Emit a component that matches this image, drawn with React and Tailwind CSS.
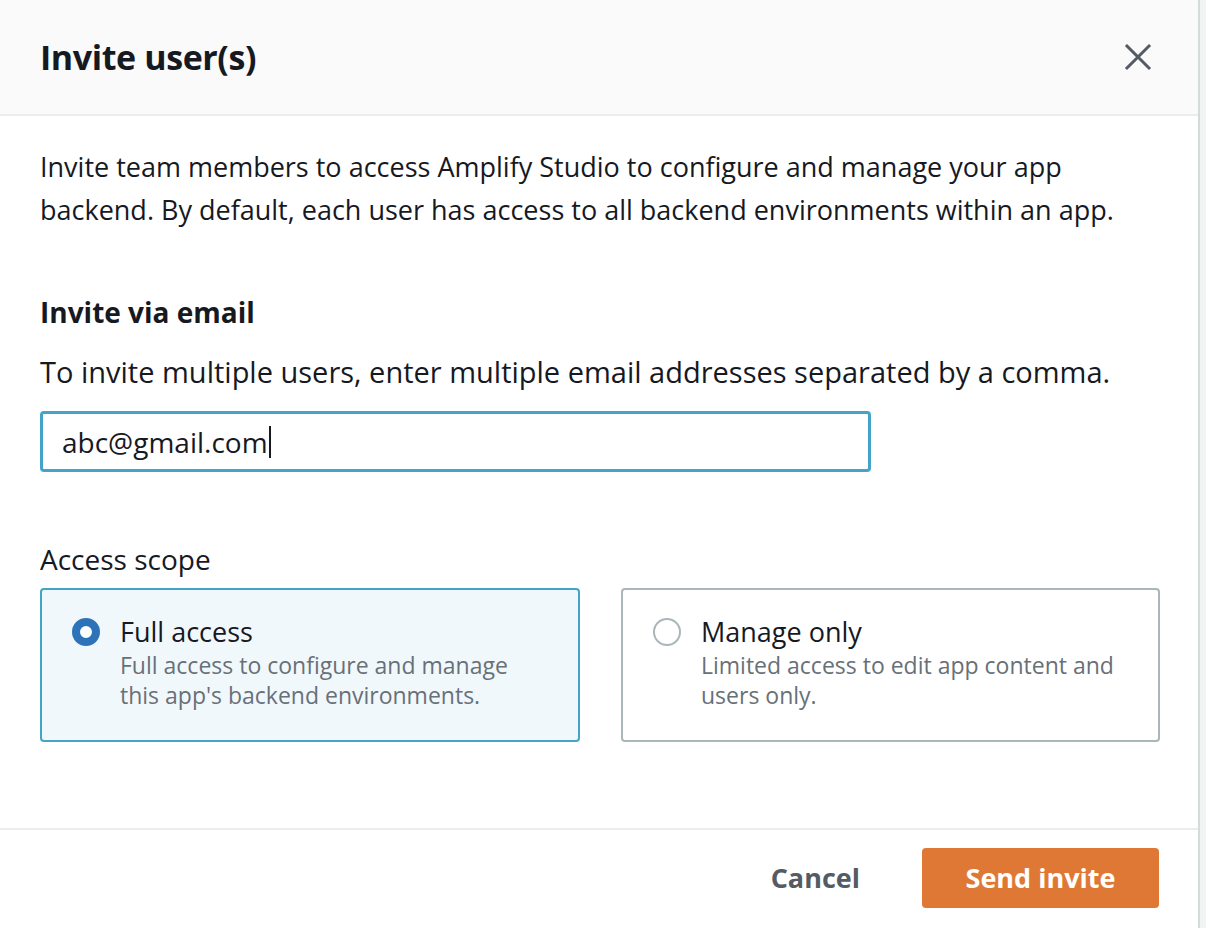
import React from "react";

export default function App() {
  return (
    <div className="flex w-[1206px] h-[928px] overflow-hidden bg-[#f2f3f3]" style={{ fontFamily: '"Open Sans", "Noto Sans", sans-serif' }}>
      <div className="w-[1200px] shrink-0 h-full bg-white border-r-2 border-[#d5dbdb] flex flex-col">
        <div className="h-[116px] shrink-0 bg-[#fafafa] border-b-2 border-[#eaeded] flex items-center justify-between pl-[40px] pr-[46px]">
          <h1 className="text-[34px] font-bold text-[#16191f] tracking-[-0.4px]">Invite user(s)</h1>
          <svg width="28" height="28" viewBox="0 0 28 28" fill="none" stroke="#545b64" strokeWidth="3" strokeLinecap="square">
            <path d="M3 3 L25 25 M25 3 L3 25" />
          </svg>
        </div>
        <div className="flex-1 pl-[40px] pr-[38px] pt-[29px] text-[#16191f]">
          <p className="text-[27px] leading-[43px] pr-[2px]">
            Invite team members to access Amplify Studio to configure and manage your app backend. By default, each user has access to all backend environments within an app.
          </p>
          <h2 className="mt-[60px] text-[28px] font-bold leading-[43px]">Invite via email</h2>
          <p className="mt-[16px] text-[29px] leading-[43px]">To invite multiple users, enter multiple email addresses separated by a comma.</p>
          <div className="mt-[18px] w-[831px] h-[61px] border-[3px] border-[#44a3c8] rounded-[4px] flex items-center pl-[19px] text-[28px]">
            <span>abc@gmail.com</span>
            <span className="w-[2px] h-[32px] bg-[#16191f] ml-[1px]"></span>
          </div>
          <div className="mt-[66px] text-[28px] leading-[43px]">Access scope</div>
          <div className="mt-[7px] flex gap-[41px]">
            <div className="w-[540px] shrink-0 h-[154px] rounded-[4px] border-2 border-[#44a3c8] bg-[#f1f8fc] flex pl-[30px] pt-[24px]">
              <div className="w-[28px] h-[28px] rounded-full border-[8px] border-[#2e73b8] bg-white mt-[4px] shrink-0"></div>
              <div className="ml-[20px]">
                <div className="text-[27px] leading-[36px] text-[#16191f]">Full access</div>
                <div className="text-[23px] leading-[30px] text-[#687078]">Full access to configure and manage<br />this app's backend environments.</div>
              </div>
            </div>
            <div className="w-[539px] shrink-0 h-[154px] rounded-[4px] border-2 border-[#aab7b8] bg-white flex pl-[30px] pt-[24px]">
              <div className="w-[28px] h-[28px] rounded-full border-2 border-[#aab7b8] bg-white mt-[4px] shrink-0"></div>
              <div className="ml-[20px]">
                <div className="text-[27px] leading-[36px] text-[#16191f]">Manage only</div>
                <div className="text-[23px] leading-[30px] text-[#687078]">Limited access to edit app content and<br />users only.</div>
              </div>
            </div>
          </div>
        </div>
        <div className="h-[100px] shrink-0 border-t-2 border-[#eaeded] flex items-center justify-end pr-[39px] pb-[2px]">
          <button className="text-[27px] font-bold text-[#545b64] mr-[62px]">Cancel</button>
          <button className="w-[237px] h-[60px] rounded-[4px] bg-[#df7834] text-white text-[27px] font-bold">Send invite</button>
        </div>
      </div>
      <div className="flex-1"></div>
    </div>
  );
}
